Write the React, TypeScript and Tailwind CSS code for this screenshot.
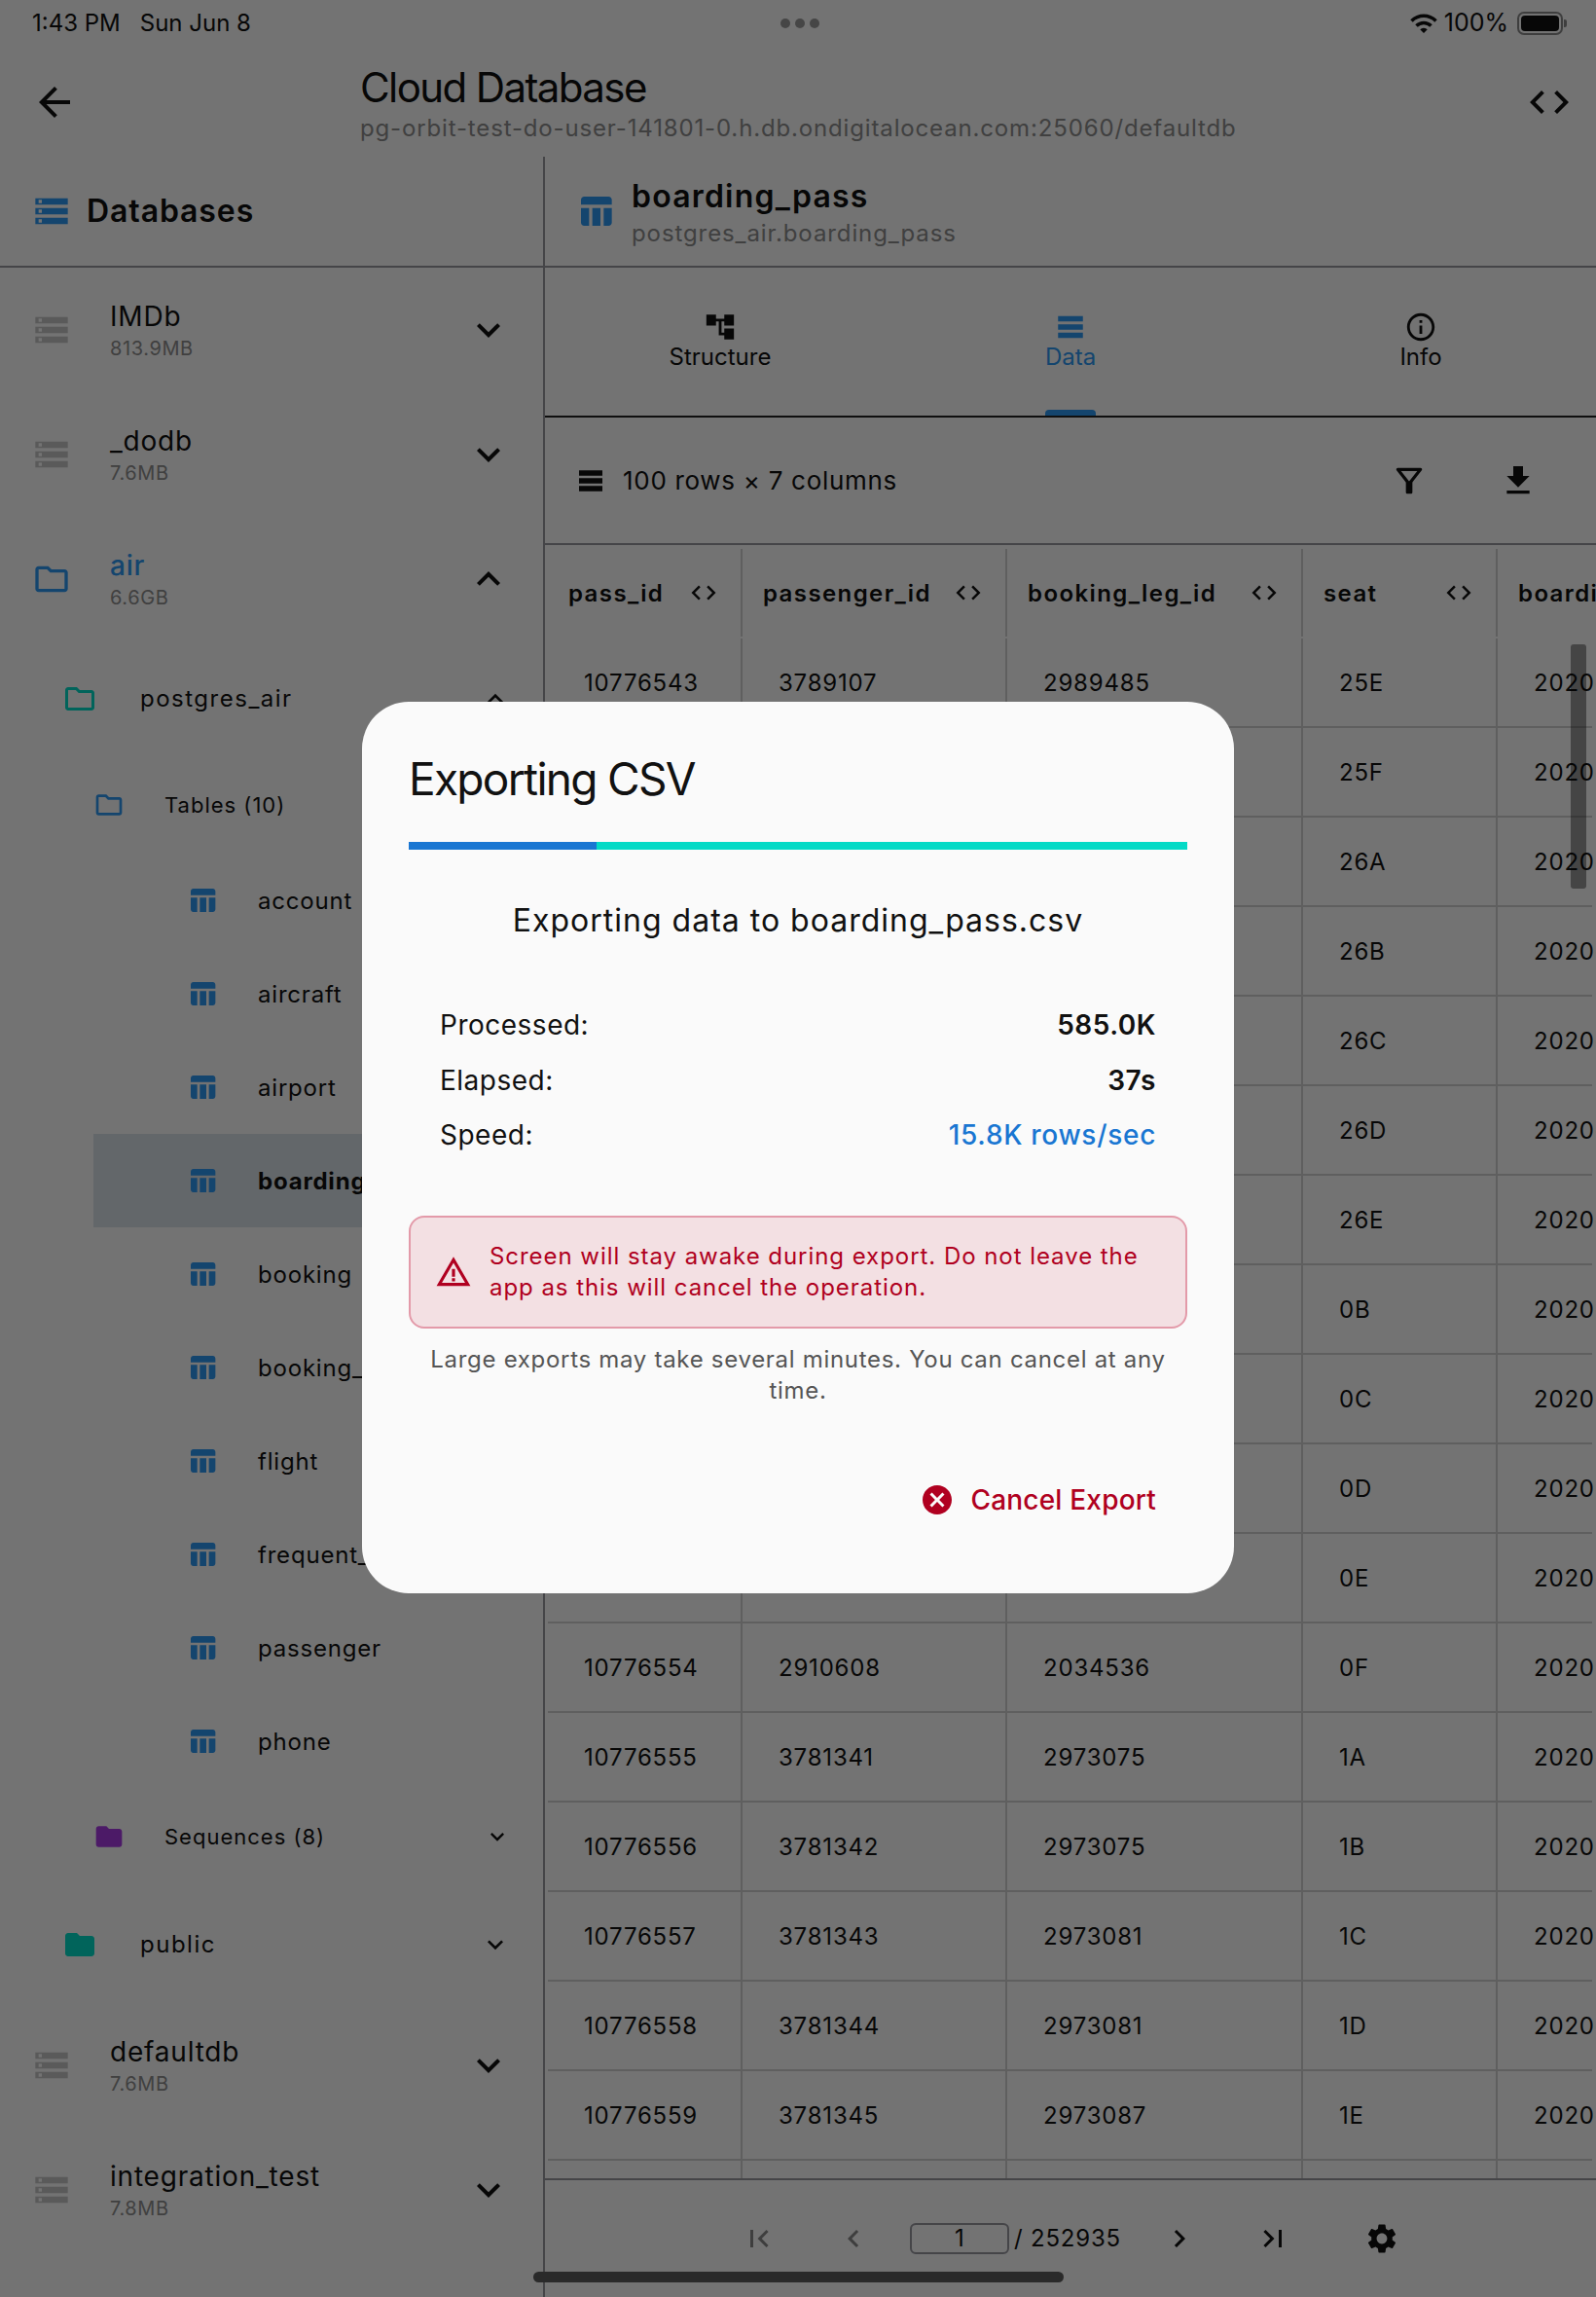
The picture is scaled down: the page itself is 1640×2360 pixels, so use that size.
import {
  MdAccountTree,
  MdArrowBack,
  MdCancel,
  MdChevronLeft,
  MdChevronRight,
  MdCode,
  MdExpandLess,
  MdExpandMore,
  MdFileDownload,
  MdFirstPage,
  MdFolder,
  MdInfoOutline,
  MdLastPage,
  MdOutlineFilterAlt,
  MdOutlineFolder,
  MdSettings,
  MdStorage,
  MdTableChart,
  MdTableRows,
  MdWarningAmber,
  MdWifi,
} from 'react-icons/md'

const tables = ['account', 'aircraft', 'airport', 'boarding_pass', 'booking', 'booking_leg', 'flight', 'frequent_flyer', 'passenger', 'phone']

const rows = [
  ['10776543', '3789107', '2989485', '25E'],
  ['10776544', '3789108', '2989485', '25F'],
  ['10776545', '3789109', '2989485', '26A'],
  ['10776546', '3789110', '2989485', '26B'],
  ['10776547', '3789111', '2989485', '26C'],
  ['10776548', '3789112', '2989485', '26D'],
  ['10776549', '3789113', '2989485', '26E'],
  ['10776550', '2910604', '2034536', '0B'],
  ['10776551', '2910605', '2034536', '0C'],
  ['10776552', '2910606', '2034536', '0D'],
  ['10776553', '2910607', '2034536', '0E'],
  ['10776554', '2910608', '2034536', '0F'],
  ['10776555', '3781341', '2973075', '1A'],
  ['10776556', '3781342', '2973075', '1B'],
  ['10776557', '3781343', '2973081', '1C'],
  ['10776558', '3781344', '2973081', '1D'],
  ['10776559', '3781345', '2973087', '1E'],
]

const columns = [
  { name: 'pass_id', width: 'w-[200px]' },
  { name: 'passenger_id', width: 'w-[272px]' },
  { name: 'booking_leg_id', width: 'w-[304px]' },
  { name: 'seat', width: 'w-[200px]' },
]

function DbRow({ name, size, active, open }: { name: string; size: string; active?: boolean; open?: boolean }) {
  return (
    <div className="h-[128px] flex items-center pl-[33px] pr-[32px]">
      {active ? (
        <MdOutlineFolder size={40} className="text-[#2c96f0] shrink-0" />
      ) : (
        <MdStorage size={40} className="text-[#c4c4c4] shrink-0" />
      )}
      <div className="ml-[40px] mt-[2px] flex-1">
        <div className={`text-[28px] leading-[36px] tracking-[0.8px] ${active ? 'text-[#2c96f0] font-medium' : 'text-[#111]'}`}>{name}</div>
        <div className="text-[20px] leading-[30px] tracking-[0.6px] text-[#8c8c8c]">{size}</div>
      </div>
      {open ? <MdExpandLess size={48} className="text-[#111]" /> : <MdExpandMore size={48} className="text-[#111]" />}
    </div>
  )
}

function TableRow({ name, selected }: { name: string; selected?: boolean }) {
  return (
    <div className={`h-[96px] ml-[96px] pl-[96px] flex items-center ${selected ? 'bg-[#d8e0e6]' : ''}`}>
      <MdTableChart size={32} className="text-[#2c96f0] shrink-0" />
      <span className={`ml-[41px] pt-[2px] text-[24px] tracking-[0.8px] text-[#111] ${selected ? 'font-bold' : ''}`}>{name}</span>
    </div>
  )
}

function Sidebar() {
  return (
    <div className="w-[560px] shrink-0 border-r-2 border-[#96969e] flex flex-col">
      <div className="h-[114px] flex items-center pl-[33px] border-b-2 border-[#96969e]">
        <MdStorage size={40} className="text-[#2c96f0]" />
        <span className="ml-[16px] text-[32px] font-semibold tracking-[0.9px] text-[#111]">Databases</span>
      </div>
      <DbRow name="IMDb" size="813.9MB" />
      <DbRow name="_dodb" size="7.6MB" />
      <DbRow name="air" size="6.6GB" active open />
      <div className="h-[118px] flex items-center pl-[64px] pr-[33px]">
        <MdOutlineFolder size={36} className="text-[#03dac6]" />
        <span className="ml-[44px] flex-1 text-[24px] tracking-[1.5px] text-[#111]">postgres_air</span>
        <MdExpandLess size={32} className="text-[#111]" />
      </div>
      <div className="h-[100px] flex items-center pl-[96px]">
        <MdOutlineFolder size={32} className="text-[#2c96f0]" />
        <span className="ml-[41px] text-[22px] tracking-[1px] text-[#111]">Tables (10)</span>
      </div>
      {tables.map((t) => (
        <TableRow key={t} name={t} selected={t === 'boarding_pass'} />
      ))}
      <div className="h-[100px] flex items-center pl-[96px] pr-[33px]">
        <MdFolder size={32} className="text-[#a53ae0]" />
        <span className="ml-[41px] flex-1 text-[22px] tracking-[1px] text-[#111]">Sequences (8)</span>
        <MdExpandMore size={28} className="text-[#111]" />
      </div>
      <div className="h-[121px] flex items-center pl-[64px] pr-[33px]">
        <MdFolder size={36} className="text-[#03dac6]" />
        <span className="ml-[44px] flex-1 text-[24px] tracking-[1.5px] text-[#111]">public</span>
        <MdExpandMore size={32} className="text-[#111]" />
      </div>
      <DbRow name="defaultdb" size="7.6MB" />
      <DbRow name="integration_test" size="7.8MB" />
    </div>
  )
}

function Tab({ label, active, children }: { label: string; active?: boolean; children: React.ReactNode }) {
  return (
    <div className={`w-[360px] h-full flex flex-col items-center pt-[44px] relative ${active ? 'text-[#2c96f0]' : 'text-[#111]'}`}>
      {children}
      <span className="text-[24px] leading-[32px] -mt-[2px]">{label}</span>
      {active && <div className="absolute bottom-0 w-[52px] h-[6px] rounded-t-[4px] bg-[#2c96f0]" />}
    </div>
  )
}

function DataTable() {
  return (
    <div className="flex-1 overflow-hidden pl-[3px] pr-[4px] text-[#111]">
      <div className="flex h-[96px]">
        {columns.map((c) => (
          <div key={c.name} className={`${c.width} shrink-0 mt-[4px] h-[90px] border-r-2 border-[#d0d0d0] flex items-center justify-between pl-[21px] pr-[23px]`}>
            <span className="pt-[2px] text-[24px] font-semibold tracking-[1.4px]">{c.name}</span>
            <MdCode size={30} />
          </div>
        ))}
        <div className="pl-[21px] pt-[4px] flex items-center text-[24px] font-semibold tracking-[1.4px] whitespace-nowrap">boarding_time</div>
      </div>
      {rows.map((r) => (
        <div key={r[0]} className="flex h-[92px] border-b-2 border-[#d0d0d0]">
          {r.map((v, i) => (
            <div key={i} className={`${columns[i].width} shrink-0 border-r-2 border-[#d0d0d0] flex items-center pl-[37px] pt-[2px] text-[24px] tracking-[0.8px]`}>
              {v}
            </div>
          ))}
          <div className="pl-[37px] pt-[2px] flex items-center text-[24px] tracking-[0.8px] whitespace-nowrap">2020-08-14</div>
        </div>
      ))}
      <div className="flex h-[20px]">
        {columns.map((c) => (
          <div key={c.name} className={`${c.width} shrink-0 border-r-2 border-[#d0d0d0]`} />
        ))}
      </div>
    </div>
  )
}

function Content() {
  return (
    <div className="flex-1 min-w-0 flex flex-col">
      <div className="h-[114px] flex items-center pl-[32px] border-b-2 border-[#96969e]">
        <MdTableChart size={40} className="text-[#2c96f0]" />
        <div className="ml-[17px] mt-[4px]">
          <div className="text-[32px] leading-[42px] font-semibold tracking-[1.2px] text-[#111]">boarding_pass</div>
          <div className="text-[24px] leading-[34px] tracking-[0.9px] text-[#8c8c8c]">postgres_air.boarding_pass</div>
        </div>
      </div>
      <div className="h-[154px] flex border-b-2 border-[#222]">
        <Tab label="Structure">
          <MdAccountTree size={34} />
        </Tab>
        <Tab label="Data" active>
          <MdTableRows size={34} />
        </Tab>
        <Tab label="Info">
          <MdInfoOutline size={34} />
        </Tab>
      </div>
      <div className="h-[131px] flex items-center border-b-2 border-[#96969e] pl-[31px] text-[#111]">
        <MdTableRows size={32} />
        <span className="ml-[17px] flex-1 text-[26px] tracking-[0.7px]">100 rows × 7 columns</span>
        <MdOutlineFilterAlt size={40} className="mr-[72px]" />
        <MdFileDownload size={40} className="mr-[60px]" />
      </div>
      <DataTable />
      <div className="h-[122px] shrink-0 border-t-2 border-[#96969e] flex items-center text-[#111]">
        <MdFirstPage size={36} className="ml-[202px] text-[#888]" />
        <MdChevronLeft size={36} className="ml-[61px] text-[#888]" />
        <div className="ml-[40px] w-[102px] h-[32px] border-2 border-[#96969e] rounded-[6px] flex items-center justify-center text-[24px]">1</div>
        <span className="ml-[5px] text-[24px] tracking-[0.8px]">/ 252935</span>
        <MdChevronRight size={36} className="ml-[42px]" />
        <MdLastPage size={36} className="ml-[60px]" />
        <MdSettings size={36} className="ml-[76px]" />
      </div>
    </div>
  )
}

function StatusBar() {
  return (
    <div className="h-[48px] flex items-center pl-[33px] pr-[30px] text-[24px] text-[#111]">
      <div className="flex-1 flex">
        <span>1:43 PM</span>
        <span className="ml-[20px]">Sun Jun 8</span>
      </div>
      <div className="flex gap-[5px]">
        <div className="size-[10px] rounded-full bg-[#999]" />
        <div className="size-[10px] rounded-full bg-[#999]" />
        <div className="size-[10px] rounded-full bg-[#999]" />
      </div>
      <div className="flex-1 flex items-center justify-end">
        <MdWifi size={30} />
        <span className="ml-[6px] text-[25px]">100%</span>
        <div className="ml-[9px] w-[47px] h-[24px] rounded-[7px] border-2 border-[#888] p-[2px]">
          <div className="w-full h-full rounded-[4px] bg-[#111]" />
        </div>
        <div className="ml-[1px] w-[3px] h-[8px] rounded-r-[2px] bg-[#888]" />
      </div>
    </div>
  )
}

function ExportDialog() {
  return (
    <div className="absolute inset-0 bg-black/54 flex items-center justify-center">
      <div className="-mt-[2px] w-[896px] h-[916px] bg-[#fafafa] rounded-[48px] px-[48px] pt-[48px]">
        <div className="text-[46px] leading-[62px] tracking-[-1.7px] text-[#111]">Exporting CSV</div>
        <div className="mt-[34px] h-[8px] flex bg-[#03dac6]">
          <div className="w-[193px] bg-[#1976d2]" />
        </div>
        <div className="mt-[49px] text-center text-[32px] leading-[48px] tracking-[1px] text-[#111]">Exporting data to boarding_pass.csv</div>
        <div className="mt-[55px] px-[32px] text-[28px] tracking-[0.5px] text-[#111]">
          <div className="h-[56.5px] flex items-center justify-between">
            <span>Processed:</span>
            <span className="font-semibold">585.0K</span>
          </div>
          <div className="h-[56.5px] flex items-center justify-between">
            <span>Elapsed:</span>
            <span className="font-semibold">37s</span>
          </div>
          <div className="h-[56.5px] flex items-center justify-between">
            <span>Speed:</span>
            <span className="font-medium tracking-[0.7px] text-[#1976d2]">15.8K rows/sec</span>
          </div>
        </div>
        <div className="mt-[54px] h-[116px] rounded-[16px] border-2 border-[#e39aa9] bg-[#f3e0e3] flex items-center pl-[25px] text-[#b00020]">
          <MdWarningAmber size={38} className="shrink-0" />
          <div className="ml-[18px] mt-[1px] text-[24px] leading-[32px] tracking-[0.95px]">
            Screen will stay awake during export. Do not leave the
            <br />
            app as this will cancel the operation.
          </div>
        </div>
        <div className="mt-[16px] text-center text-[24px] leading-[32px] tracking-[0.7px] text-[#555]">
          Large exports may take several minutes. You can cancel at any time.
        </div>
        <div className="mt-[72px] h-[48px] pr-[32px] flex items-center justify-end text-[#b00020]">
          <MdCancel size={36} />
          <span className="ml-[16px] text-[28px] font-medium tracking-[0.2px]">Cancel Export</span>
        </div>
      </div>
    </div>
  )
}

export default function App() {
  return (
    <div className="relative w-[1640px] h-[2360px] overflow-hidden bg-[#fafafa] flex flex-col font-[Inter,sans-serif]">
      <StatusBar />
      <div className="h-[113px] flex items-center pl-[32px] pr-[24px] text-[#111]">
        <MdArrowBack size={48} />
        <div className="ml-[290px] flex-1">
          <div className="text-[42px] leading-[54px] tracking-[-1.6px]">Cloud Database</div>
          <div className="text-[24px] leading-[30px] tracking-[0.85px] text-[#8c8c8c]">pg-orbit-test-do-user-141801-0.h.db.ondigitalocean.com:25060/defaultdb</div>
        </div>
        <MdCode size={48} />
      </div>
      <div className="flex-1 flex min-h-0">
        <Sidebar />
        <Content />
      </div>
      <div className="absolute right-[10px] top-[662px] w-[16px] h-[251px] rounded-[3px] bg-black/40" />
      <ExportDialog />
      <div className="absolute left-[548px] top-[2334px] w-[545px] h-[11px] rounded-full bg-[#2a2a2a]" />
    </div>
  )
}
